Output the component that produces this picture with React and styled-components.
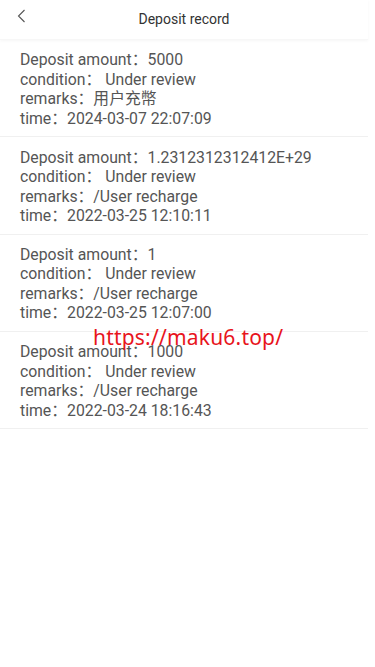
import React from "react";
import styled, { createGlobalStyle } from "styled-components";

const Global = createGlobalStyle`
  html, body { margin: 0; padding: 0; background: #fff; }
  body { font-family: Roboto, "Noto Sans CJK SC", sans-serif; }
`;

const Page = styled.div`
  position: relative;
  width: 375px;
  min-height: 667px;
  background: #fff;
`;

const Header = styled.header`
  position: relative;
  height: 40px;
  display: flex;
  align-items: center;
  justify-content: center;
  width: 368px;
  box-shadow: 0 1px 3px rgba(0, 0, 0, 0.04);
  border-bottom: 1px solid #f7f7f7;
  box-sizing: border-box;
`;

const Back = styled.button`
  position: absolute;
  left: 14px;
  top: 7px;
  width: 14px;
  height: 18px;
  padding: 0;
  border: 0;
  background: none;
  display: flex;
  align-items: center;
  justify-content: center;
`;

const Title = styled.h1`
  margin: 0;
  font-size: 14px;
  font-weight: 400;
  color: #333;
  margin-top: -2px;
`;

const List = styled.div`
  width: 368px;
`;

const Item = styled.div`
  padding: 10.3px 20px 8px;
  border-bottom: 1px solid #f0f0f0;
`;

const Line = styled.div`
  font-size: 15.8px;
  line-height: 19.5px;
  color: #555;
  white-space: nowrap;
`;

const Watermark = styled.div`
  position: absolute;
  left: 93px;
  top: 323px;
  font-family: "Noto Sans", "DejaVu Sans", sans-serif;
  font-size: 21px;
  color: #e8141c;
  letter-spacing: 0.2px;
  pointer-events: none;
`;

const records = [
  { amount: "5000", condition: "Under review", remarks: "用户充幣", time: "2024-03-07 22:07:09" },
  { amount: "1.2312312312412E+29", condition: "Under review", remarks: "/User recharge", time: "2022-03-25 12:10:11" },
  { amount: "1", condition: "Under review", remarks: "/User recharge", time: "2022-03-25 12:07:00" },
  { amount: "1000", condition: "Under review", remarks: "/User recharge", time: "2022-03-24 18:16:43" },
];

export default function App() {
  return (
    <Page>
      <Global />
      <Header>
        <Back aria-label="back">
          <svg width="9" height="14" viewBox="0 0 9 14">
            <path d="M7.5 1 L1.5 7 L7.5 13" fill="none" stroke="#555" strokeWidth="1.1" />
          </svg>
        </Back>
        <Title>Deposit record</Title>
      </Header>
      <List>
        {records.map((r, i) => (
          <Item key={i}>
            <Line>Deposit amount：{r.amount}</Line>
            <Line>condition：&nbsp;Under review</Line>
            <Line>remarks：{r.remarks}</Line>
            <Line>time：{r.time}</Line>
          </Item>
        ))}
      </List>
      <Watermark>https://maku6.top/</Watermark>
    </Page>
  );
}
